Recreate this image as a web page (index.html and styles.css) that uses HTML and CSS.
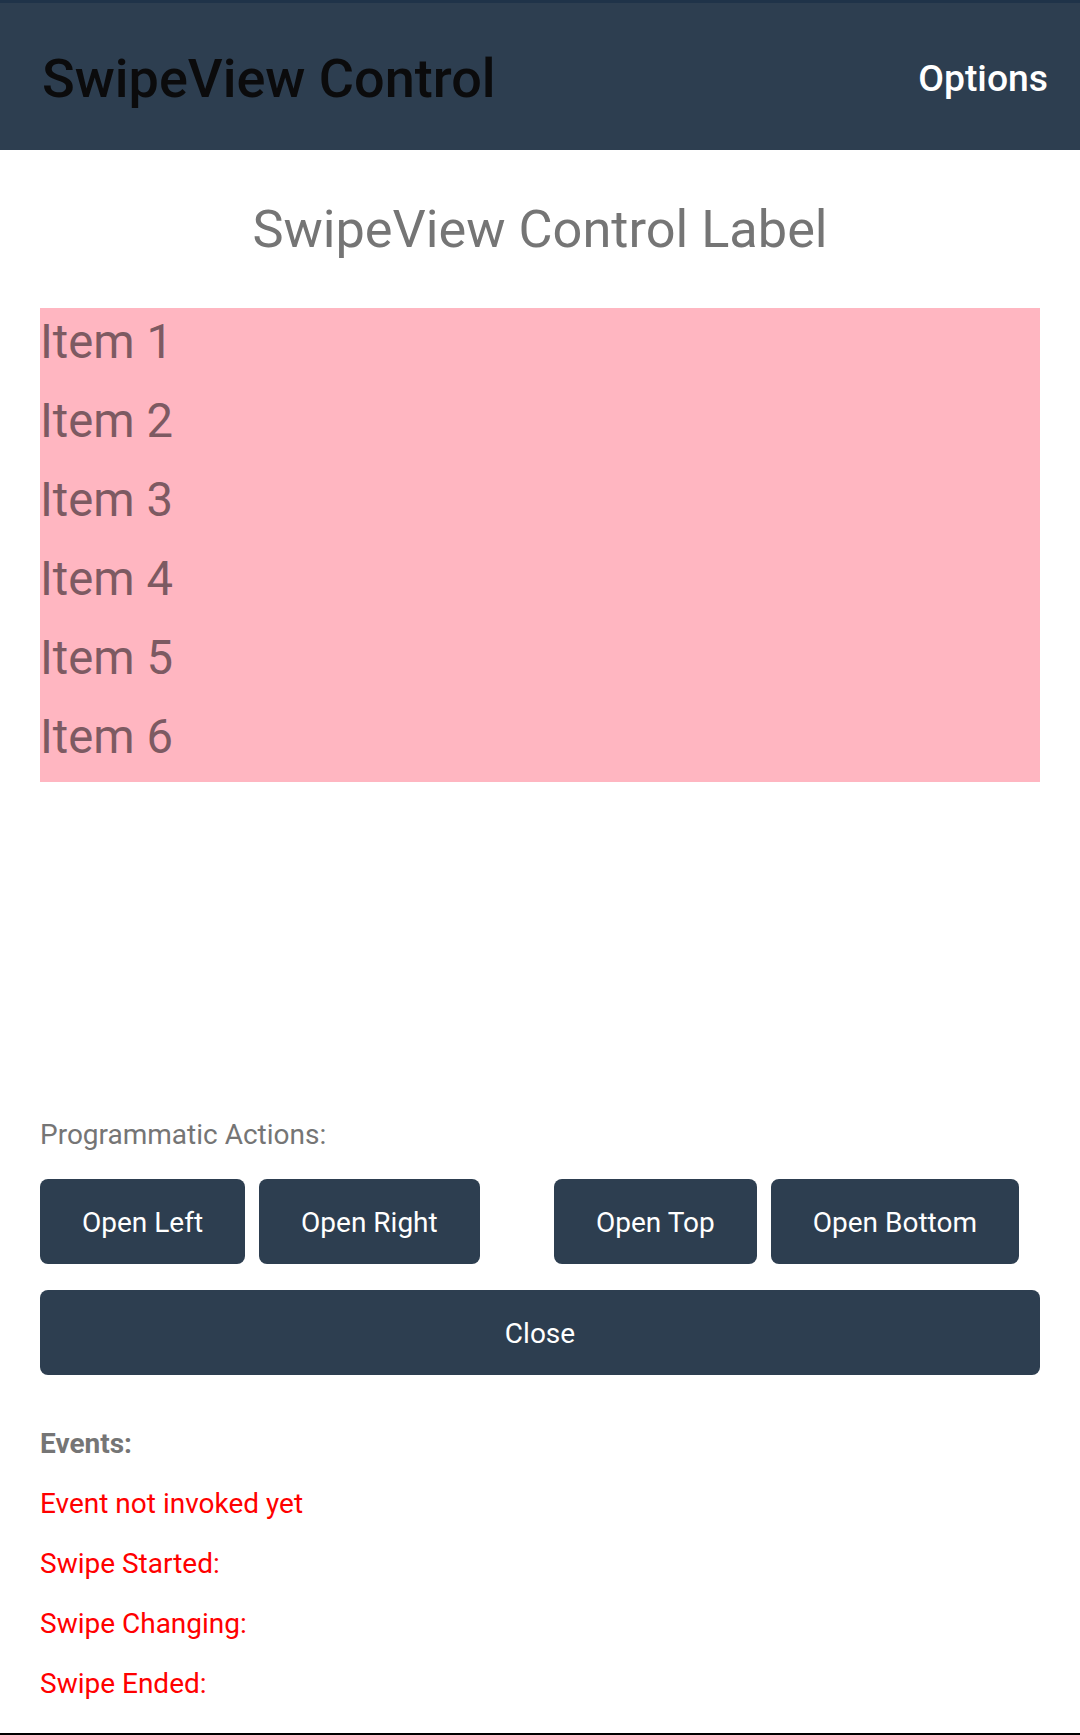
FILE: index.html
```html
<!DOCTYPE html>
<html lang="en">
<head>
<meta charset="utf-8">
<title>SwipeView Control</title>
<link rel="stylesheet" href="styles.css">
</head>
<body>
<div class="status-edge"></div>
<header class="toolbar">
  <h1 class="toolbar-title">SwipeView Control</h1>
  <div class="toolbar-action">Options</div>
</header>
<main class="page">
  <div class="page-label">SwipeView Control Label</div>
  <div class="swipe-list">
    <div class="swipe-item">Item 1</div>
    <div class="swipe-item">Item 2</div>
    <div class="swipe-item">Item 3</div>
    <div class="swipe-item">Item 4</div>
    <div class="swipe-item">Item 5</div>
    <div class="swipe-item">Item 6</div>
  </div>
  <div class="section-label">Programmatic Actions:</div>
  <div class="action-grid">
    <div class="action-group">
      <button class="btn">Open Left</button>
      <button class="btn">Open Right</button>
    </div>
    <div class="action-group">
      <button class="btn">Open Top</button>
      <button class="btn">Open Bottom</button>
    </div>
  </div>
  <button class="btn btn-wide">Close</button>
  <div class="events">
    <div class="events-title">Events:</div>
    <div class="event-line">Event not invoked yet</div>
    <div class="event-line">Swipe Started:</div>
    <div class="event-line">Swipe Changing:</div>
    <div class="event-line">Swipe Ended:</div>
  </div>
</main>
<div class="nav-edge"></div>
</body>
</html>
```
FILE: styles.css
```css
html, body {
  margin: 0;
  padding: 0;
  width: 1080px;
  height: 1735px;
  overflow: hidden;
  background: #ffffff;
  font-family: Roboto, "Noto Sans", "Liberation Sans", sans-serif;
}

.status-edge {
  height: 3px;
  background: #1f3349;
}

.toolbar {
  height: 147px;
  background: #2d3e50;
  display: flex;
  justify-content: space-between;
  align-items: flex-start;
  padding: 0 32px 0 42px;
  box-sizing: border-box;
}

.toolbar-title {
  margin: 44px 0 0 0;
  font-size: 54px;
  line-height: 63px;
  font-weight: 500;
  color: #0b0b0c;
}

.toolbar-action {
  margin-top: 53px;
  font-size: 37.3px;
  line-height: 44px;
  font-weight: 500;
  color: #ffffff;
}

.page {
  padding: 0 40px;
  display: flex;
  flex-direction: column;
}

.page-label {
  margin: 49px 0 48px;
  font-size: 52.3px;
  line-height: 61px;
  text-align: center;
  color: #757575;
}

.swipe-list {
  height: 474px;
  background: #ffb6c1;
}

.swipe-item {
  height: 79px;
  box-sizing: border-box;
  padding-top: 7px;
  font-size: 47.2px;
  line-height: 55px;
  color: #7d5a62;
}

.section-label {
  margin-top: 337px;
  font-size: 28px;
  line-height: 32px;
  color: #757575;
}

.action-grid {
  margin-top: 28px;
  display: grid;
  grid-template-columns: 1fr 1fr;
  column-gap: 28px;
}

.action-group {
  display: flex;
  gap: 14px;
}

.btn {
  height: 85px;
  padding: 2px 42px 0;
  border: none;
  border-radius: 8px;
  background: #2d3e50;
  color: #ffffff;
  font-family: Roboto, "Noto Sans", "Liberation Sans", sans-serif;
  font-size: 28px;
  line-height: 32px;
  white-space: nowrap;
}

.btn-wide {
  margin-top: 26px;
  width: 100%;
}

.events {
  margin-top: 53px;
  display: flex;
  flex-direction: column;
  gap: 28px;
}

.events-title {
  font-size: 28px;
  line-height: 32px;
  font-weight: 700;
  color: #757575;
}

.event-line {
  font-size: 28px;
  line-height: 32px;
  color: #ff0000;
}

.nav-edge {
  position: fixed;
  left: 0;
  right: 0;
  bottom: 0;
  height: 2px;
  background: #000000;
}
```
